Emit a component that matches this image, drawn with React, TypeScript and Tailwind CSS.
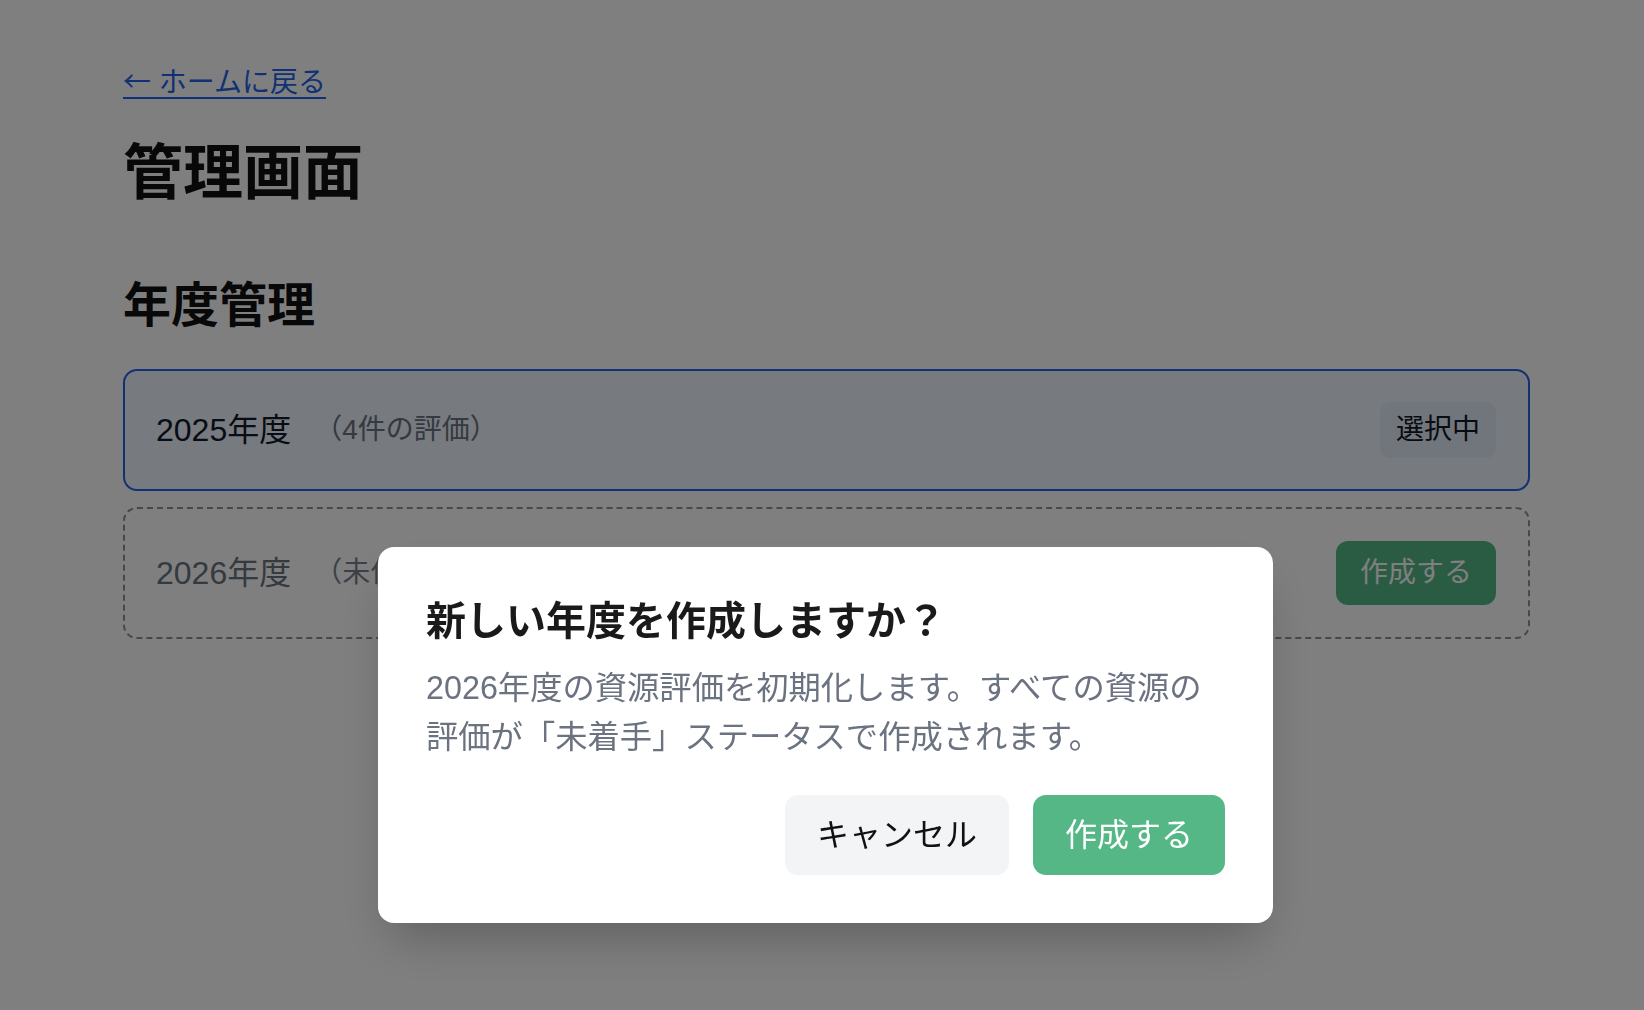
const font = "font-['Liberation_Sans','Noto_Sans_CJK_JP',sans-serif]";

function YearCard({
  year,
  note,
  active,
}: {
  year: string;
  note: string;
  active: boolean;
}) {
  return (
    <div
      className={
        active
          ? "flex items-center justify-between rounded-[14px] border-2 border-[#2563eb] bg-[#eff5ff] py-[31px] pl-[31px] pr-[32px]"
          : "mt-[16px] flex items-center justify-between rounded-[14px] border-2 border-dashed border-[#8b919c] py-[32px] pl-[31px] pr-[32px]"
      }
    >
      <div className="flex items-center">
        <span className={active ? "text-[32px] leading-[40px] text-[#111827]" : "text-[32px] leading-[40px] text-[#6b7280]"}>
          {year}
        </span>
        <span className={active ? "ml-[23px] text-[28px] leading-[40px] text-[#6b7280]" : "ml-[23px] text-[28px] leading-[40px] text-[#7b818c]"}>
          {note}
        </span>
      </div>
      {active ? (
        <span className="rounded-[10px] bg-[#e2ebf9] px-[16px] py-[8px] text-[28px] leading-[40px] text-[#111827]">
          選択中
        </span>
      ) : (
        <button className="rounded-[12px] bg-[#55b786] px-[24px] py-[12px] text-[28px] leading-[40px] text-white">
          作成する
        </button>
      )}
    </div>
  );
}

export default function App() {
  return (
    <div className={`relative min-h-screen bg-white ${font}`}>
      <div className="w-[1530px] pl-[123px] pt-[60px]">
        <a href="#" className="text-[28px] leading-[40px] text-[#2563eb] underline underline-offset-[5px] decoration-[2px]">
          <span className="font-['Noto_Sans_CJK_JP',sans-serif]">←</span> ホームに戻る
        </a>
        <h1 className="mt-[38px] text-[60px] font-bold leading-[66px] text-[#111111]">管理画面</h1>
        <h2 className="mt-[71px] text-[48px] font-bold leading-[56px] text-[#111111]">年度管理</h2>
        <div className="mt-[35px]">
          <YearCard year="2025年度" note="（4件の評価）" active />
          <YearCard year="2026年度" note="（未作成）" active={false} />
        </div>
      </div>

      <div className="fixed inset-0 flex items-start justify-center bg-black/50 pl-[7px] pt-[547px]">
        <div className="w-[895px] rounded-[16px] bg-white p-[48px] shadow-2xl">
          <h3 className="text-[40px] font-bold leading-[52px] text-[#1a1a1a]">新しい年度を作成しますか？</h3>
          <p className="mt-[17px] text-[32.3px] leading-[49px] text-[#6b7280]">
            2026年度の資源評価を初期化します。すべての資源の
            <br />
            評価が「未着手」ステータスで作成されます。
          </p>
          <div className="mt-[33px] flex justify-end gap-[24px]">
            <button className="rounded-[13px] bg-[#f3f4f6] px-[32px] py-[16px] text-[32px] leading-[48px] text-[#111111]">
              キャンセル
            </button>
            <button className="rounded-[13px] bg-[#55b786] px-[32px] py-[16px] text-[32px] leading-[48px] text-white">
              作成する
            </button>
          </div>
        </div>
      </div>
    </div>
  );
}
